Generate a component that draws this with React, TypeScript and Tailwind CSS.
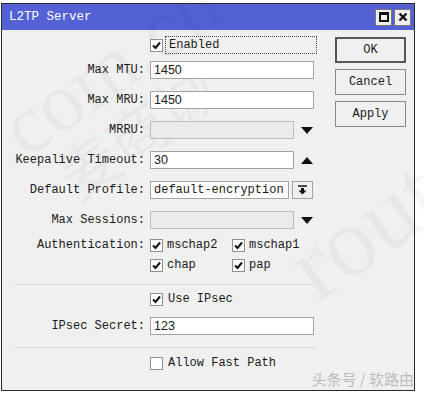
import type { ReactNode } from 'react';

const mono = "font-['Liberation_Mono','DejaVu_Sans_Mono',monospace]";
const sans = "font-['Liberation_Sans',Arial,sans-serif]";

function Check({ on = true }: { on?: boolean }) {
  return (
    <span className="flex h-[13px] w-[13px] shrink-0 items-center justify-center border border-[#8f8f8f] bg-white">
      {on && (
        <svg width="9" height="9" viewBox="0 0 9 9">
          <path d="M1 4.5 L3.5 7 L8 1.5" fill="none" stroke="#111" strokeWidth="2" />
        </svg>
      )}
    </span>
  );
}

function Tri({ up = false }: { up?: boolean }) {
  return (
    <svg width="12" height="7" viewBox="0 0 12 7" className="ml-[7px]">
      <path d={up ? 'M0 7 L6 0 L12 7 Z' : 'M0 0 L12 0 L6 7 Z'} fill="#111" />
    </svg>
  );
}

function Row({ label, children }: { label?: string; children: ReactNode }) {
  return (
    <div className="flex h-[18px] items-center">
      <div className="w-[148px] shrink-0 pr-[5px] text-right">{label}</div>
      <div className="flex items-center">{children}</div>
    </div>
  );
}

function Field({ value, w, disabled }: { value?: string; w: number; disabled?: boolean }) {
  return (
    <div
      className={`flex h-[18px] items-center border px-[3px] text-[12.5px] ${sans} ${
        disabled ? 'border-[#bdbdbd] bg-[#ebebeb]' : 'border-[#a3a3a3] bg-white'
      }`}
      style={{ width: w }}
    >
      {value}
    </div>
  );
}

function Btn({ label, main }: { label: string; main?: boolean }) {
  return (
    <div
      className={`flex h-[26px] w-[71px] items-center justify-center bg-[#f0f0f0] ${
        main ? 'border-2 border-[#555]' : 'border border-[#8a8a8a]'
      }`}
    >
      {label}
    </div>
  );
}

export default function App() {
  return (
    <div className={`relative h-[394px] w-[424px] overflow-hidden bg-white text-[12px] text-[#1a1a1a] ${mono}`}>
      <div className="ml-[1px] mt-[3px] w-[414px] border border-[#2a2a2a] bg-[#f0f0f0]">
        {/* title bar */}
        <div className="flex h-[26px] items-center justify-between bg-[#5361d4] pl-[7px] pr-[3px] text-white">
          <span className="text-[12.5px]">L2TP Server</span>
          <div className="flex gap-[2px]">
            <span className="flex h-[17px] w-[17px] items-center justify-center border border-[#777] bg-[#f0f0f0]">
              <span className="h-[10px] w-[10px] border-2 border-t-[3px] border-[#111]" />
            </span>
            <span className="flex h-[17px] w-[17px] items-center justify-center border border-[#777] bg-[#f0f0f0]">
              <svg width="10" height="10" viewBox="0 0 10 10">
                <path d="M1.5 1.5 L8.5 8.5 M8.5 1.5 L1.5 8.5" stroke="#111" strokeWidth="2.4" />
              </svg>
            </span>
          </div>
        </div>

        {/* body */}
        <div className="relative flex h-[360px] pt-[6px]">
          {/* faint background watermarks */}
          <span className="pointer-events-none absolute left-[-14px] top-[-6px] -rotate-[35deg] font-['Liberation_Serif',serif] text-[84px] leading-none text-black/[0.035]">
            com.cn
          </span>
          <span className="pointer-events-none absolute left-[44px] top-[70px] -rotate-[35deg] font-['Noto_Sans_CJK_SC',sans-serif] text-[60px] leading-none text-black/[0.035]">
            麦商城
          </span>
          <span className="pointer-events-none absolute left-[282px] top-[150px] -rotate-[35deg] font-['Liberation_Serif',serif] text-[100px] leading-none text-black/[0.035]">
            rout
          </span>

          <div className="relative flex w-[323px] flex-col">
            <Row>
              <Check />
              <span className="ml-[2px] flex h-[18px] w-[152px] items-center border border-dotted border-[#444] pl-[3px]">
                Enabled
              </span>
            </Row>
            <div className="mt-[7px] flex flex-col gap-[12px]">
              <Row label="Max MTU:">
                <Field value="1450" w={164} />
              </Row>
              <Row label="Max MRU:">
                <Field value="1450" w={164} />
              </Row>
              <Row label="MRRU:">
                <Field w={144} disabled />
                <Tri />
              </Row>
              <Row label="Keepalive Timeout:">
                <Field value="30" w={144} />
                <Tri up />
              </Row>
              <Row label="Default Profile:">
                <div className="flex h-[18px] w-[139px] items-center border border-[#a3a3a3] bg-white px-[3px]">
                  default-encryption
                </div>
                <span className="ml-[3px] flex h-[18px] w-[21px] items-center justify-center border border-[#a3a3a3] bg-[#f0f0f0]">
                  <svg width="9" height="10" viewBox="0 0 9 10">
                    <path d="M0 1 H9" stroke="#111" strokeWidth="1.5" />
                    <path d="M3 3 H6 V5.5 H8.5 L4.5 9.5 L0.5 5.5 H3 Z" fill="#111" />
                  </svg>
                </span>
              </Row>
              <Row label="Max Sessions:">
                <Field w={144} disabled />
                <Tri />
              </Row>
            </div>
            <div className="mt-[8px] flex h-[16px] items-center">
              <div className="w-[148px] shrink-0 pr-[5px] text-right">Authentication:</div>
              <Check />
              <span className="ml-[4px] w-[65px]">mschap2</span>
              <Check />
              <span className="ml-[4px]">mschap1</span>
            </div>
            <div className="mt-[4px] flex h-[16px] items-center">
              <div className="w-[148px] shrink-0" />
              <Check />
              <span className="ml-[4px] w-[65px]">chap</span>
              <Check />
              <span className="ml-[4px]">pap</span>
            </div>
            <div className="ml-[12px] mt-[11px] w-[302px] border-t border-[#dcdcdc]" />
            <div className="mt-[6px] flex h-[16px] items-center">
              <div className="w-[148px] shrink-0" />
              <Check />
              <span className="ml-[5px]">Use IPsec</span>
            </div>
            <div className="mt-[10px]">
              <Row label="IPsec Secret:">
                <Field value="123" w={164} />
              </Row>
            </div>
            <div className="ml-[12px] mt-[12px] w-[302px] border-t border-[#dcdcdc]" />
            <div className="mt-[7px] flex h-[16px] items-center">
              <div className="w-[148px] shrink-0" />
              <Check on={false} />
              <span className="ml-[5px]">Allow Fast Path</span>
            </div>
          </div>

          <div className="relative ml-[10px] flex flex-col gap-[6px] pt-[1px]">
            <Btn label="OK" main />
            <Btn label="Cancel" />
            <Btn label="Apply" />
          </div>
        </div>
      </div>

      <span className="pointer-events-none absolute right-[10px] top-[369px] font-['Noto_Sans_CJK_SC',sans-serif] text-[15px] leading-[20px] text-[#bcbcbc]">
        头条号 / 软路由
      </span>
    </div>
  );
}
